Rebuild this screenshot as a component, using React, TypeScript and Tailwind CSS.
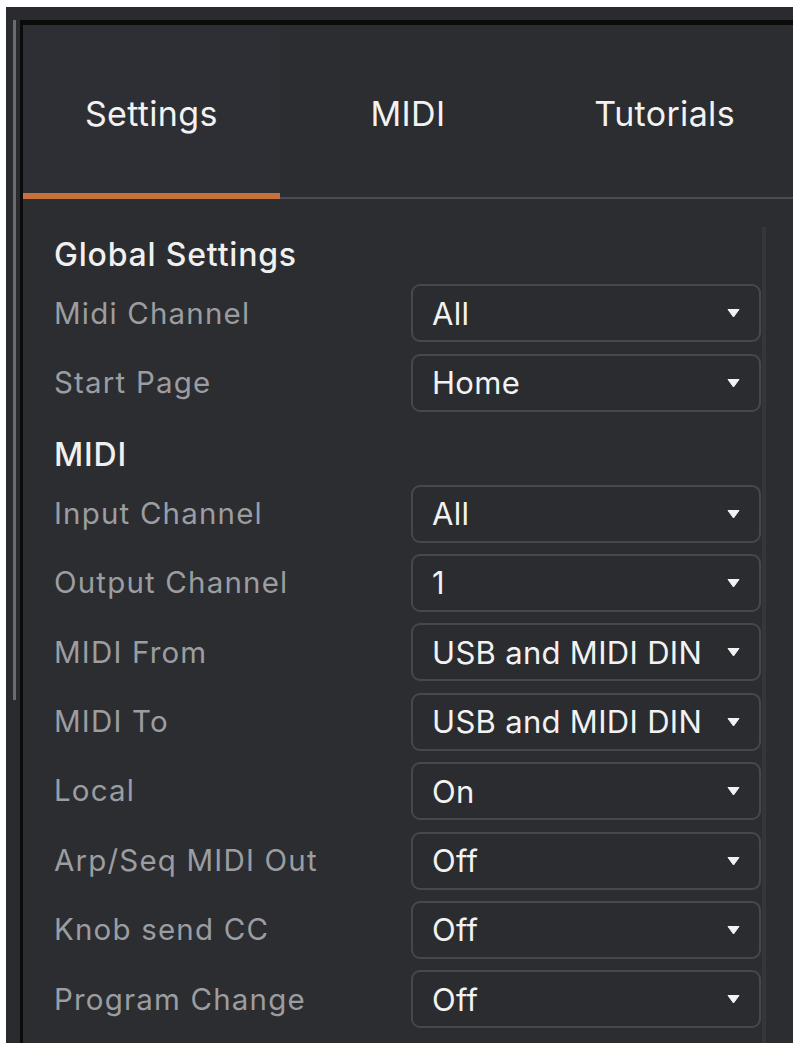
import React from "react";

const font = { fontFamily: "Inter, 'Noto Sans', sans-serif" };

function Caret() {
  return (
    <svg width="13" height="10" viewBox="0 0 13 10" className="shrink-0">
      <path d="M1 1.5 L12 1.5 L6.5 9 Z" fill="#f2f2f2" stroke="#f2f2f2" strokeWidth="1" strokeLinejoin="round" />
    </svg>
  );
}

function Row({ label, value }: { label: string; value: string }) {
  return (
    <div className="flex items-center h-[58px]">
      <div className="w-[357px] text-[29.5px] tracking-[0.04em] text-[#9c9da1] leading-none">{label}</div>
      <div className="w-[350px] h-[58px] rounded-[9px] border-2 border-[#45484d] bg-[#2a2c30] flex items-center justify-between pl-[19px] pr-[19px]">
        <span className="text-[31px] tracking-[0.01em] text-[#f2f2f2] leading-none">{value}</span>
        <Caret />
      </div>
    </div>
  );
}

function Heading({ children, className = "" }: { children: React.ReactNode; className?: string }) {
  return (
    <div className={`h-[36px] flex items-center text-[32px] tracking-[0.025em] text-[#f0f0f0] font-medium leading-none ${className}`}>
      {children}
    </div>
  );
}

export default function App() {
  const tabs = ["Settings", "MIDI", "Tutorials"];
  return (
    <div className="w-[793px] h-[1046px] bg-white pt-[7px] pl-[6px] pb-[3px] overflow-hidden" style={font}>
      <div className="h-full flex flex-col bg-[#2a2b2e]">
        <div className="h-[13px] shrink-0" />
        <div className="flex flex-1 min-h-0">
          <div className="w-[14px] shrink-0 pl-[7px]">
            <div className="w-[3px] h-[680px] bg-[#6b6c70]" />
          </div>
          <div className="flex-1 flex flex-col border-t-[5px] border-l-[3px] border-[#0b0b0c] bg-[#2b2d31]">
            <div className="flex h-[174px] shrink-0 bg-[#2b2d31]">
              {tabs.map((t, i) => (
                <div
                  key={t}
                  className={
                    i === 0
                      ? "flex-1 flex items-center justify-center pt-[8px] text-[34px] tracking-[0.01em] text-[#f2f2f2] bg-[#2e2f34] border-b-[6px] border-[#c9713a]"
                      : "flex-1 flex items-center justify-center pt-[4px] text-[34px] tracking-[0.01em] text-[#f2f2f2] border-b-2 border-[#4a4c51]"
                  }
                >
                  {t}
                </div>
              ))}
            </div>
            <div className="flex flex-1 min-h-0">
              <div className="w-[739px] shrink-0 flex flex-col gap-[11.4px] pt-[38px] pl-[31px]">
                <Heading>Global Settings</Heading>
                <Row label="Midi Channel" value="All" />
                <Row label="Start Page" value="Home" />
                <Heading className="mt-[14px]">MIDI</Heading>
                <Row label="Input Channel" value="All" />
                <Row label="Output Channel" value="1" />
                <Row label="MIDI From" value="USB and MIDI DIN" />
                <Row label="MIDI To" value="USB and MIDI DIN" />
                <Row label="Local" value="On" />
                <Row label="Arp/Seq MIDI Out" value="Off" />
                <Row label="Knob send CC" value="Off" />
                <Row label="Program Change" value="Off" />
              </div>
              <div className="pt-[28px]">
                <div className="w-[4px] h-full bg-[#34363a]" />
              </div>
              <div className="flex-1" />
            </div>
          </div>
        </div>
      </div>
    </div>
  );
}
